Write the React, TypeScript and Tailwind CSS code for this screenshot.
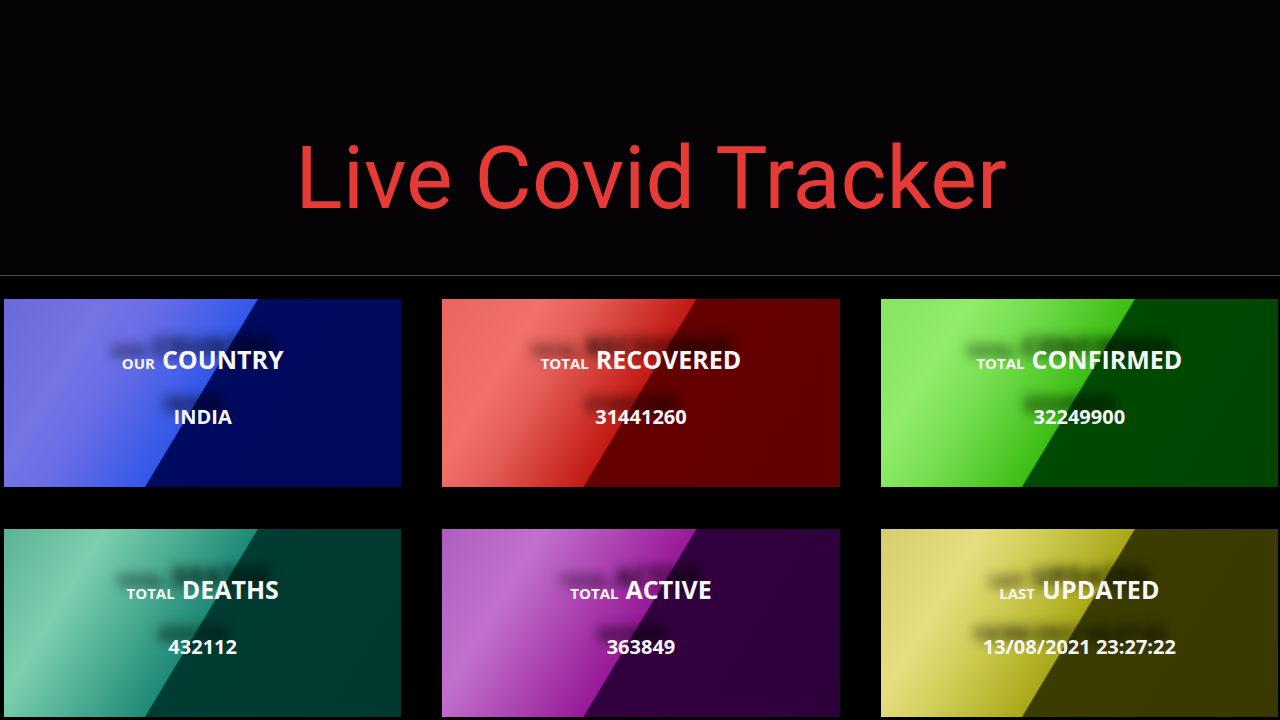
const cards = [
  {
    small: "OUR",
    big: "COUNTRY",
    value: "INDIA",
    bg: "bg-[linear-gradient(121deg,#6a6adc_0%,#7474e4_20%,#6a6ee6_30%,#3358ea_49.6%,#000a5e_50%,#00095a_100%)]",
  },
  {
    small: "TOTAL",
    big: "RECOVERED",
    value: "31441260",
    bg: "bg-[linear-gradient(121deg,#ea6660_0%,#f0706a_20%,#e45c56_30%,#c21a14_49.6%,#640000_50%,#600000_100%)]",
  },
  {
    small: "TOTAL",
    big: "CONFIRMED",
    value: "32249900",
    bg: "bg-[linear-gradient(121deg,#86e462_0%,#90ec6a_18%,#76de50_30%,#3cbd14_49.6%,#014a01_50%,#004400_100%)]",
  },
  {
    small: "TOTAL",
    big: "DEATHS",
    value: "432112",
    bg: "bg-[linear-gradient(121deg,#5cb296_0%,#7ccfae_20%,#5cb89c_30%,#1f8a76_49.6%,#003c33_50%,#00382f_100%)]",
  },
  {
    small: "TOTAL",
    big: "ACTIVE",
    value: "363849",
    bg: "bg-[linear-gradient(121deg,#ae5ebe_0%,#c070cc_20%,#b454bc_30%,#981a98_49.6%,#32003e_50%,#2e003a_100%)]",
  },
  {
    small: "LAST",
    big: "UPDATED",
    value: "13/08/2021 23:27:22",
    bg: "bg-[linear-gradient(121deg,#d4ce6e_0%,#e4de80_20%,#d4d05c_30%,#a8a818_49.6%,#3c3c00_50%,#383800_100%)]",
  },
];

function StatCard({ small, big, value, bg }: (typeof cards)[number]) {
  return (
    <div
      className={`${bg} h-[188px] flex flex-col items-center pt-[44px] text-[#f7f7f7] font-['Open_Sans',sans-serif] font-bold [text-shadow:-10px_-13px_12px_rgba(0,0,0,0.95)]`}
    >
      <div className="flex items-baseline gap-[7px] leading-[32px]">
        <span className="text-[15px]">{small}</span>
        <span className="text-[25px]">{big}</span>
      </div>
      <div className="mt-[24px] text-[20px] leading-[28px]">{value}</div>
    </div>
  );
}

export default function App() {
  return (
    <div className="w-[1280px] h-[720px] bg-black overflow-hidden">
      <header className="h-[276px] bg-[#050305] border-b border-[#4a4a4a] pt-[134px] pl-[22px] flex justify-center">
        <h1 className="text-[88px] leading-none text-[#e53a35] font-['Roboto',sans-serif] font-normal">
          Live Covid Tracker
        </h1>
      </header>
      <main className="grid grid-cols-3 gap-x-[41px] gap-y-[42px] pl-[4px] pr-[2px] pt-[23px]">
        {cards.map((c) => (
          <StatCard key={c.big} {...c} />
        ))}
      </main>
    </div>
  );
}
